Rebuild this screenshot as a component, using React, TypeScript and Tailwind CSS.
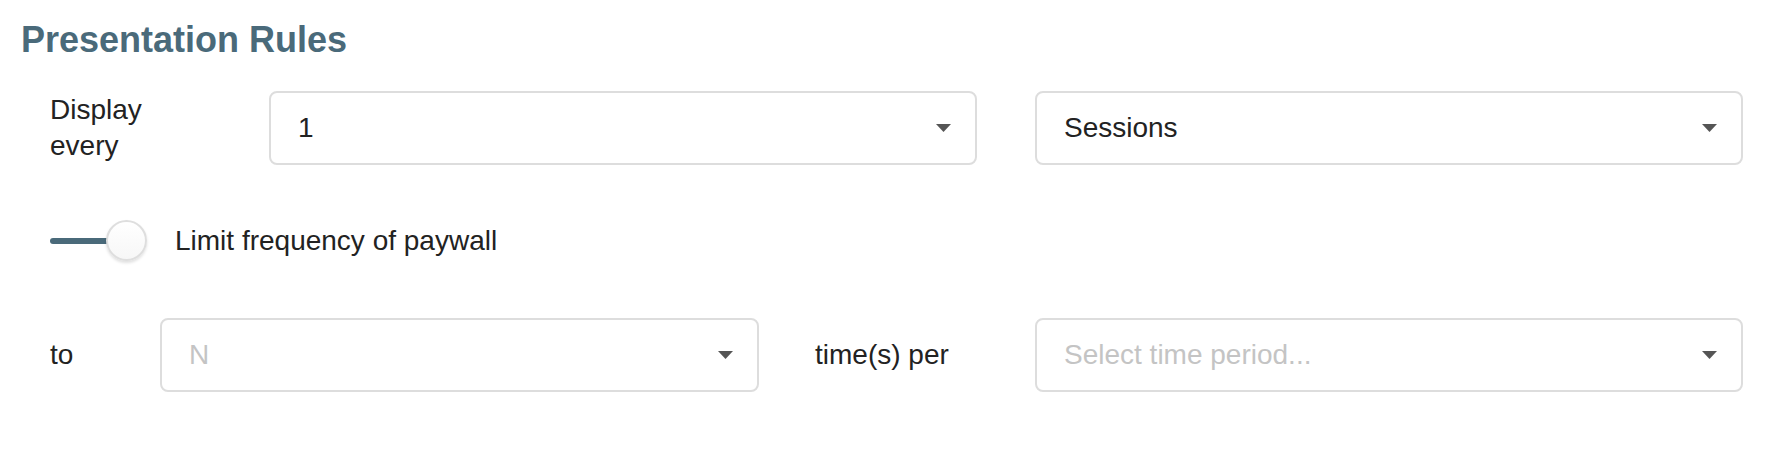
import React from "react";

function Caret() {
  return (
    <svg width="15" height="8" viewBox="0 0 15 8" className="shrink-0">
      <polygon points="0,0 15,0 7.5,8" fill="#555555" />
    </svg>
  );
}

function Select({
  value,
  placeholder,
  width,
  className = "",
}: {
  value?: string;
  placeholder?: string;
  width: string;
  className?: string;
}) {
  return (
    <div
      className={`${width} ${className} h-[74px] shrink-0 flex items-center justify-between border-2 border-[#dddddd] rounded-[8px] bg-white pl-[27px] pr-[24px]`}
    >
      {value ? (
        <span className="text-[28px] leading-[36px] text-[#222222]">{value}</span>
      ) : (
        <span className="text-[28px] leading-[36px] text-[#c4c4c4]">{placeholder}</span>
      )}
      <Caret />
    </div>
  );
}

export default function App() {
  return (
    <div className="w-[1790px] h-[458px] bg-white text-[#222222] font-['Liberation_Sans',Arial,Helvetica,sans-serif] overflow-hidden">
      <h2 className="pt-[20px] pl-[21px] text-[36px] leading-[40px] font-bold text-[#4a6a7a]">
        Presentation Rules
      </h2>

      <div className="mt-[31px] ml-[50px] flex items-center">
        <div className="w-[219px] shrink-0 text-[28px] leading-[36px]">
          Display
          <br />
          every
        </div>
        <Select width="w-[708px]" value="1" />
        <Select width="w-[708px]" className="ml-[58px]" value="Sessions" />
      </div>

      <div className="mt-[55px] ml-[50px] flex items-center h-[41px]">
        <div className="relative w-[97px] h-[41px] shrink-0">
          <div className="absolute left-0 top-[18px] w-[80px] h-[6px] rounded-full bg-[#4a6a7a]" />
          <div className="absolute left-[56px] top-0 w-[41px] h-[41px] rounded-full bg-gradient-to-b from-white to-[#f7f7f7] border-2 border-[#dedede] shadow-[0_2px_3px_rgba(0,0,0,0.12)]" />
        </div>
        <span className="ml-[28px] text-[28px] leading-[36px]">Limit frequency of paywall</span>
      </div>

      <div className="mt-[57px] ml-[50px] flex items-center">
        <div className="w-[110px] shrink-0 text-[28px] leading-[36px]">to</div>
        <Select width="w-[599px]" placeholder="N" />
        <div className="ml-[56px] w-[220px] shrink-0 text-[28px] leading-[36px]">time(s) per</div>
        <Select width="w-[708px]" placeholder="Select time period..." />
      </div>
    </div>
  );
}
